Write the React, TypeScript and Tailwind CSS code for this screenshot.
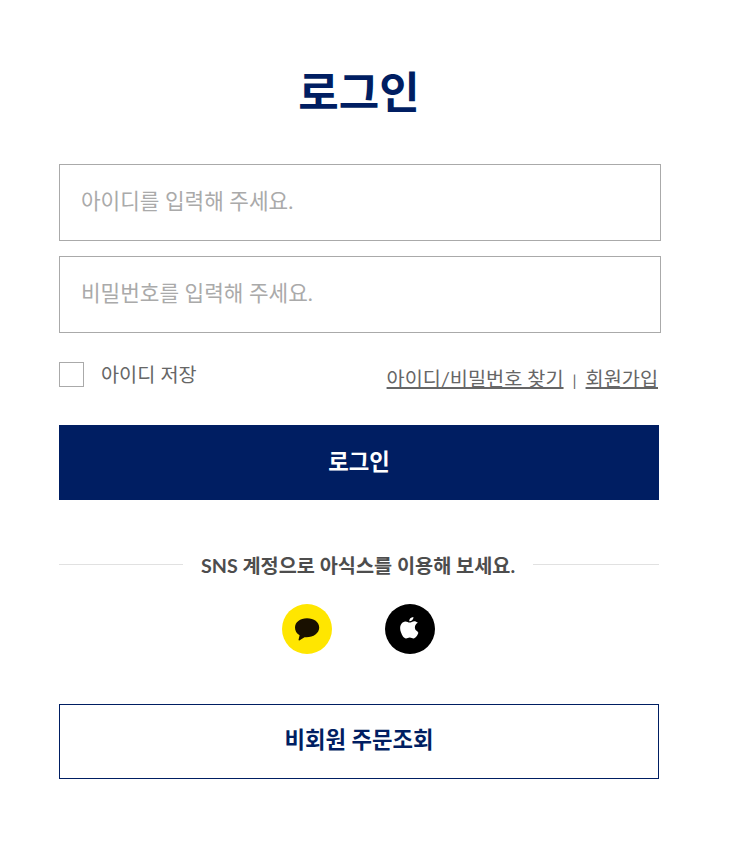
import React from "react";
export default function App() {
  return (
    <main className="h-[841px] w-[729px] bg-white pl-[59px] font-[Lato,'Noto_Sans_CJK_KR',sans-serif] text-[#666]">
      <h1 className="h-[164px] w-[600px] pt-[59px] text-center text-[44px] leading-[66px] font-bold text-[#001e62]">로그인</h1>
      <form className="w-[600px]">
        <div className="flex h-[77px] w-[602px] items-center border border-[#aaa] pl-[21px] pb-[2px] text-[21.33px] text-[#aaa]">아이디를 입력해 주세요.</div>
        <div className="mt-[15px] flex h-[77px] w-[602px] items-center border border-[#aaa] pl-[21px] pb-[2px] text-[21.33px] text-[#aaa]">비밀번호를 입력해 주세요.</div>
        <div className="flex h-[92px] items-start justify-between">
          <label className="flex pt-[29px] text-[19.7px] leading-[25px]"><span className="mr-[17px] h-[25px] w-[25px] border border-[#aaa]" />아이디 저장</label>
          <div className="flex h-[58px] items-start pt-[33px] text-[19.7px] leading-[25px]"><a className="underline decoration-2 underline-offset-[1px]">아이디/비밀번호 찾기</a><span className="mx-[9px] pt-px text-[16px]">|</span><a className="mr-px underline decoration-2 underline-offset-[1px]">회원가입</a></div>
        </div>
        <button type="button" className="h-[75px] w-full bg-[#001e62] pb-[2px] text-[22.3px] font-bold text-white">로그인</button>
      </form>
      <div className="mt-[52px] flex h-[26px] w-[600px] items-center justify-between text-[#4d4d4d]">
        <span className="mb-[2px] h-px w-[124px] bg-[#e1e1e1]" /><p className="pt-[2px] text-[19.7px] font-bold">SNS 계정으로 아식스를 이용해 보세요.</p><span className="mb-[2px] h-px w-[126px] bg-[#e1e1e1]" />
      </div>
      <div className="mt-[26px] flex w-[598px] justify-center gap-[53px]">
        <span className="flex h-[50px] w-[50px] items-center justify-center rounded-full bg-[#ffe600]"><svg width="26" height="24" viewBox="0 0 26 24" fill="#191000"><path d="M13 1.200C6 1.200 1 5.200 1 10.500c0 3.300 1.500 6 4.600 7.700L4.500 23q.3.800 1.200.3L10.500 20.200C18.500 21 25.200 16.700 25.200 10.500 25.200 5 20 1.200 13 1.200Z" /></svg></span>
        <span className="flex h-[50px] w-[50px] items-center justify-center rounded-full bg-black"><svg className="mb-px" width="20" height="24" viewBox="4 2 15 18" fill="white"><path d="M17 12.700c-2.800-1.400-2.200-5 .4-6.300-1-1-2.400-1.400-3.400-1.100-1.300.3-1.900.8-2.900.8-.8 0-1.700-.8-3-.8-3.500.2-4.900 4.400-3.400 8.200.8 2.200 2.100 4.600 3.800 4.600 1.200 0 1.500-.7 2.800-.7s1.700.7 2.900.7c1.500 0 2.900-2.100 3.600-4.200-.3-.2-.5-.5-.8-1.200ZM14.100 2c-2 .1-3.200 1.400-3.200 3.200 2 0 3.200-1.300 3.200-3.200Z" /></svg></span>
      </div>
      <button className="mt-[50px] h-[75px] w-[600px] border border-[#001e62] pb-[3px] text-[22.3px] font-bold text-[#001e62]">비회원 주문조회</button>
    </main>
  );
}
